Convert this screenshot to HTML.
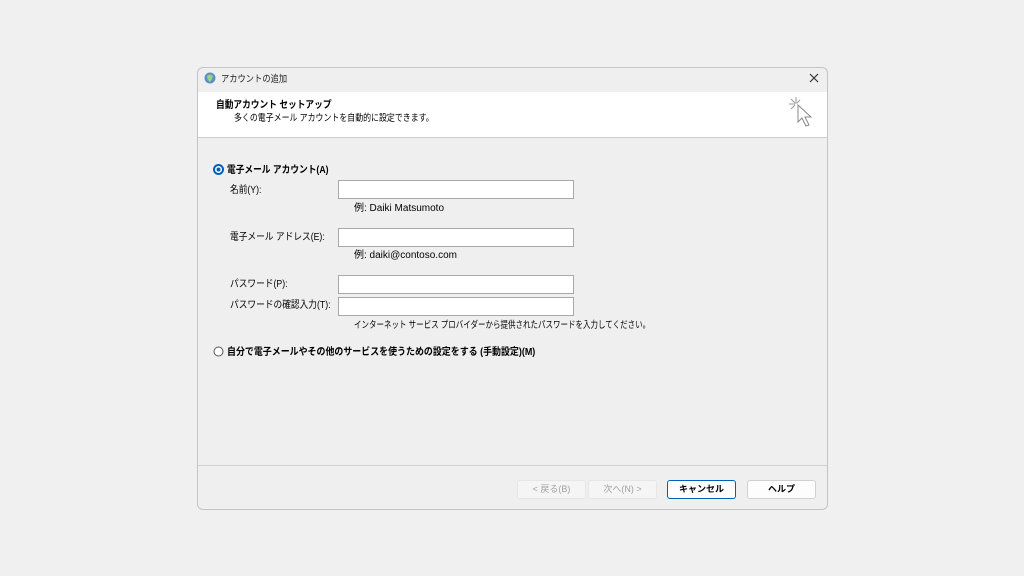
<!DOCTYPE html><html><head><meta charset="utf-8"><style>
body{margin:0;width:1024px;height:576px;background:#f0f0f0;font-family:"Liberation Sans","Noto Sans CJK JP",sans-serif;font-size:10px;line-height:12px;color:#000;position:relative;overflow:hidden}
.a{position:absolute;white-space:nowrap;transform-origin:left center}
.s{transform:scaleX(0.87)}
.dlg{position:absolute;left:197px;top:67px;width:629px;height:441px;border:1px solid #c4c4c4;border-radius:6px;background:#efefef;overflow:hidden}
.inp{position:absolute;left:338px;width:234px;height:17px;background:#fff;border:1px solid #a8a8a8}
.btn{position:absolute;top:480px;width:67px;height:17px;border:1px solid #d0d0d0;border-radius:3px;background:#fdfdfd;text-align:center;line-height:17px;font-size:9px}
.dis{background:#f5f5f5;color:#a0a0a0;border-color:#e6e6e6}
</style></head><body>
<div class="dlg">
<div style="position:absolute;left:0;top:24px;width:629px;height:45px;background:#fff;border-bottom:1px solid #cfcfcf"></div>
<div style="position:absolute;left:0;top:397px;width:629px;height:1px;background:#d0d0d0"></div>
</div>
<svg class="a" style="left:204px;top:72px" width="12" height="12"><circle cx="6" cy="6" r="5.5" fill="#5b8fc9"/><path d="M3 4q3-3 6 0q-1 4-3 6q-3-2-3-6z" fill="#9fd08a"/></svg>
<div class="a s" style="left:221px;top:74px;font-size:9.5px;color:#222">アカウントの追加</div>
<svg class="a" style="left:809px;top:73px" width="10" height="10"><path d="M1 1L9 9M9 1L1 9" stroke="#333" stroke-width="1.2"/></svg>
<div class="a s" style="left:216px;top:100px;font-weight:bold">自動アカウント セットアップ</div>
<div class="a" style="left:234px;top:113px;font-size:9.5px;transform:scaleX(0.835)">多くの電子メール アカウントを自動的に設定できます。</div>
<svg class="a" style="left:786px;top:95px" width="32" height="40"><g stroke="#999" stroke-width="1"><path d="M10 2v7M3 9h6M14 5l-3 3M5 4l4 4M5 14l4-4"/></g><path d="M12 10v17l4-4 4 8 3-1-4-8h6z" fill="#fff" stroke="#888"/></svg>
<svg class="a" style="left:213px;top:164px" width="11" height="11"><circle cx="5.5" cy="5.5" r="4.5" fill="#fff" stroke="#005fb8" stroke-width="2"/><circle cx="5.5" cy="5.5" r="2" fill="#005fb8"/></svg>
<div class="a s" style="left:227px;top:165px;font-weight:bold">電子メール アカウント(A)</div>
<div class="a s" style="left:230px;top:185px">名前(Y):</div>
<div class="inp" style="top:180px"></div>
<div class="a" style="left:354px;top:203px;font-size:10px">例: Daiki Matsumoto</div>
<div class="a s" style="left:230px;top:232px">電子メール アドレス(E):</div>
<div class="inp" style="top:228px"></div>
<div class="a" style="left:354px;top:250px;font-size:10px">例: daiki@contoso.com</div>
<div class="a s" style="left:230px;top:279px">パスワード(P):</div>
<div class="inp" style="top:275px"></div>
<div class="a s" style="left:230px;top:300px">パスワードの確認入力(T):</div>
<div class="inp" style="top:297px"></div>
<div class="a" style="left:354px;top:320px;font-size:9.5px;transform:scaleX(0.79)">インターネット サービス プロバイダーから提供されたパスワードを入力してください。</div>
<svg class="a" style="left:213px;top:346px" width="11" height="11"><circle cx="5.5" cy="5.5" r="4.5" fill="#fff" stroke="#555" stroke-width="1"/></svg>
<div class="a" style="left:227px;top:347px;font-weight:bold;transform:scaleX(0.895)">自分で電子メールやその他のサービスを使うための設定をする (手動設定)(M)</div>
<div class="btn dis" style="left:517px">&lt; 戻る(B)</div>
<div class="btn dis" style="left:588px">次へ(N) &gt;</div>
<div class="btn" style="left:667px;border:1px solid #005fb8;font-weight:bold">キャンセル</div>
<div class="btn" style="left:747px;font-weight:bold">ヘルプ</div>
</body></html>
